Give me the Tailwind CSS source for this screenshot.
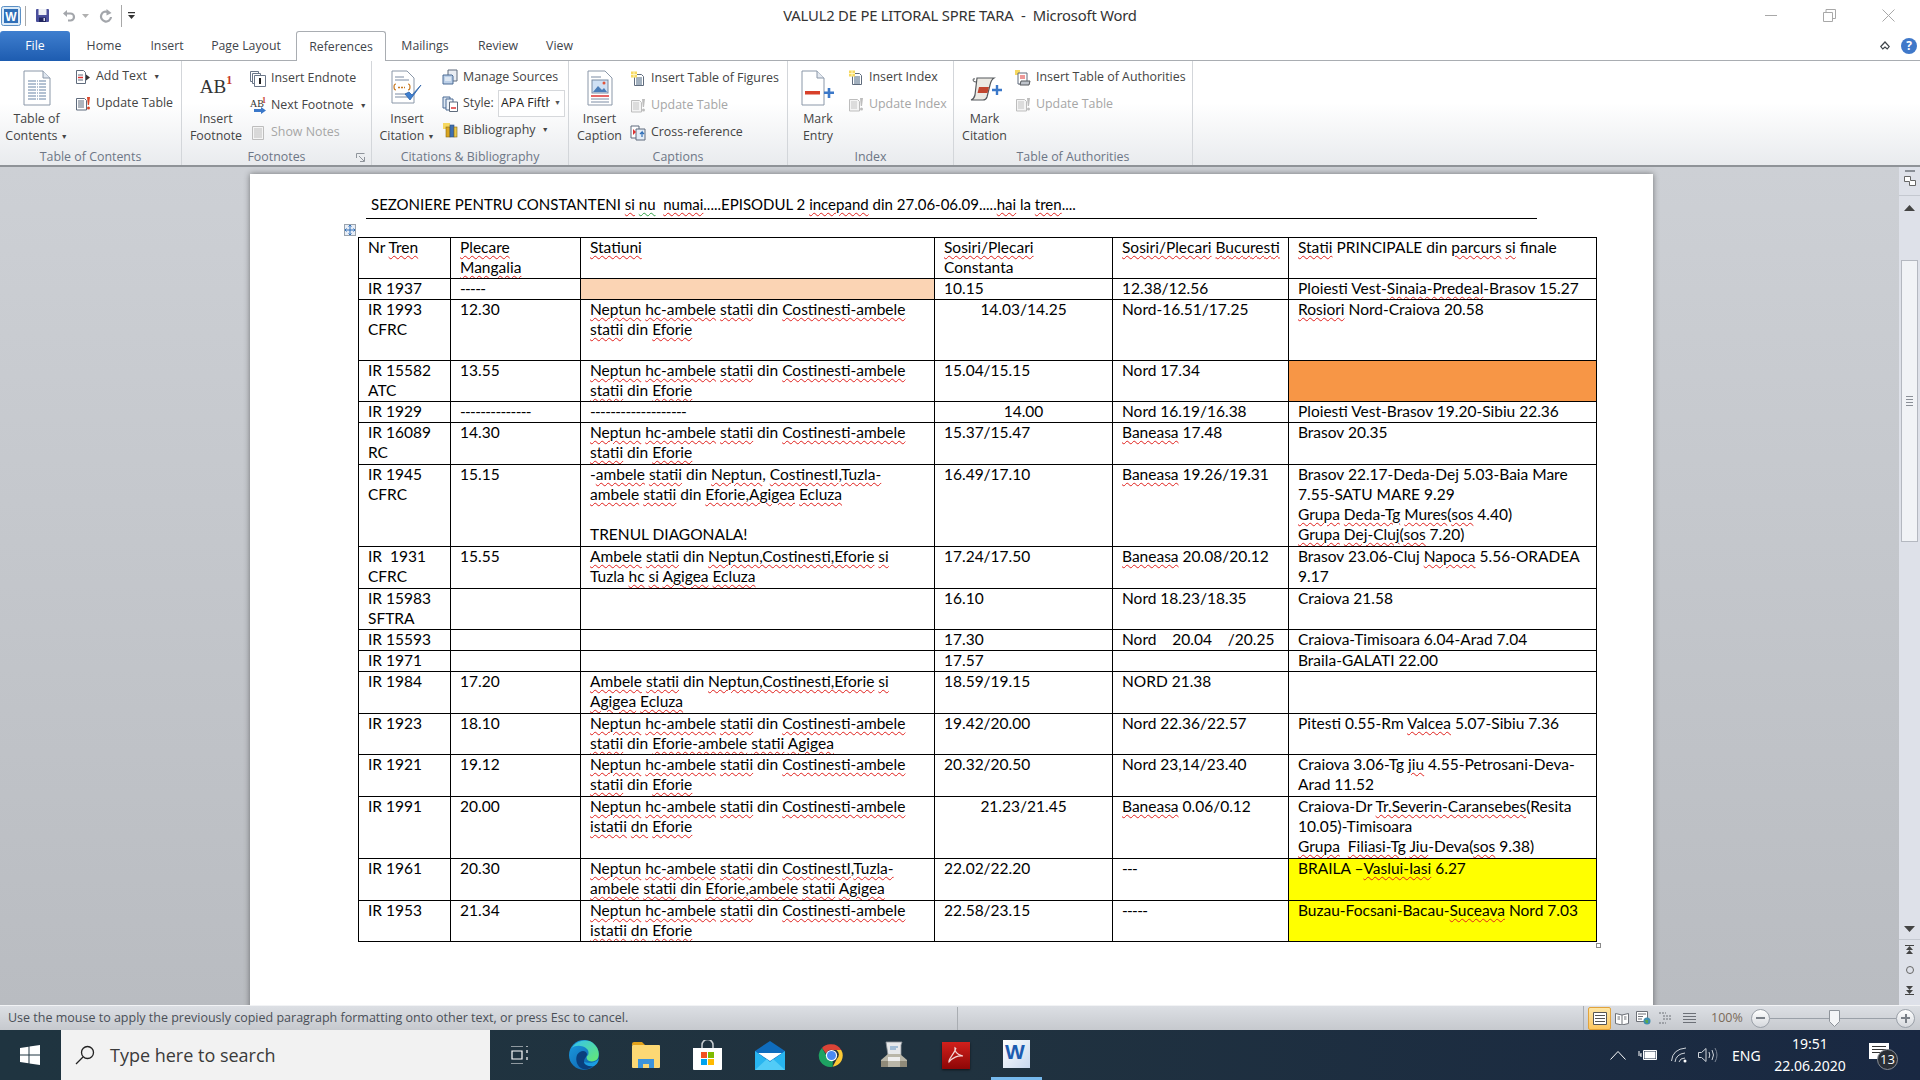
<!DOCTYPE html>
<html lang="en">
  <head>
    <meta charset="UTF-8" />
    <script src="https://cdn.jsdelivr.net/npm/@tailwindcss/browser@4"></script>
    <title>VALUL2 DE PE LITORAL SPRE TARA - Microsoft Word</title>
  </head>
  <body class="overflow-hidden bg-white font-['Open_Sans',sans-serif]">
    <!-- shared ribbon icons -->
    <svg class="hidden">
      <symbol id="update" viewBox="0 0 16 16">
        <path d="M1.5 2.5h8l2 2v9.500h-10z" fill="#fff" stroke="#5f6b7c" />
        <path d="M3 5h6M3 7h6M3 9h6M3 11h6" stroke="#5f6b7c" />
        <path d="M12 1h3l-1 8h-1.200z" fill="#d9482b" />
        <circle cx="13.500" cy="12" r="1.500" fill="#d9482b" />
      </symbol>
      <symbol id="updateoff" viewBox="0 0 16 16">
        <path d="M1.500 2.500h8l2 2v9.500h-10z" fill="#f4f4f4" stroke="#bdbdbd" />
        <path d="M3 5h6M3 7h6M3 9h6M3 11h6" stroke="#c4c4c4" />
        <path d="M12 1h3l-1 8h-1.200z" fill="#bdbdbd" />
        <circle cx="13.500" cy="12" r="1.500" fill="#bdbdbd" />
      </symbol>
      <symbol id="newlist" viewBox="0 0 16 16">
        <path d="M4.500 3.500h7l2 2v9h-9z" fill="#fff" stroke="#5f6b7c" />
        <path d="M6 7h6M6 9h6M6 11h6M6 13h6" stroke="#47637f" />
        <rect x="1" y="0.500" width="6" height="6" fill="#f6d860" />
        <path d="M1 3.500h6M4 .5v6" stroke="#fff6c4" />
      </symbol>
    </svg>

    <div class="flex h-[1080px] w-[1920px] flex-col">
      <!-- title bar -->
      <header class="grid h-[31px] shrink-0 grid-cols-[1fr_auto_1fr] items-center">
        <div class="flex items-center pl-[1px]">
          <svg class="h-[20px] w-[20px]" viewBox="0 0 20 20">
            <rect x=".5" y=".5" width="19" height="19" rx="2" fill="#dcebf8" stroke="#5b8fc4" />
            <rect x="3" y="3" width="14" height="14" fill="#2f6fb8" />
            <text x="10" y="15" text-anchor="middle" font-family="Liberation Sans" font-weight="700" font-size="12" fill="#fff">W</text>
          </svg>
          <div class="ml-[4px] h-[20px] w-px bg-[#a8a8a8]"></div>
          <svg class="ml-[9px] h-[15px] w-[15px]" viewBox="0 0 15 15">
            <rect x="1" y="1" width="13" height="13" rx="1" fill="#4a4f9c" />
            <rect x="3.500" y="1" width="8" height="6" fill="#eef0f6" />
            <rect x="4" y="9.500" width="7" height="4.500" fill="#20245e" />
            <rect x="8.500" y="10" width="1.500" height="3" fill="#d7d9ea" />
          </svg>
          <svg class="ml-[12px] h-[14px] w-[14px]" viewBox="0 0 14 14" fill="none" stroke="#a3a6ab" stroke-width="2.200">
            <path d="M3 4.500h5.500a3.500 3.500 0 0 1 0 7H6" />
            <path d="M1 4.500 5 1v7z" fill="#a3a6ab" stroke="none" />
          </svg>
          <svg class="ml-[6px] h-[4px] w-[7px]" viewBox="0 0 7 4"><path d="M0 0h7L3.500 4z" fill="#b0b0b0" /></svg>
          <svg class="ml-[10px] h-[14px] w-[14px]" viewBox="0 0 14 14" fill="none" stroke="#a3a6ab" stroke-width="2.200">
            <path d="M9.500 3.200a5 5 0 1 0 2.500 4.800" />
            <path d="M7.500 0v6.500l5-2.500z" fill="#a3a6ab" stroke="none" />
          </svg>
          <div class="ml-[8px] h-[22px] w-px bg-[#a8a8a8]"></div>
          <svg class="ml-[6px] h-[7px] w-[7px]" viewBox="0 0 7 7">
            <path d="M0 0h7v1.300H0zM0 3h7L3.500 7z" fill="#333" />
          </svg>
        </div>
        <h1 class="whitespace-pre text-[14.800px] tracking-[-0.2px] text-[#333] font-['Noto_Sans',sans-serif]">VALUL2 DE PE LITORAL SPRE TARA  -  Microsoft Word</h1>
        <div class="flex items-center justify-end pr-[25px]">
          <div class="h-px w-[12px] bg-[#a8a8a8]"></div>
          <svg class="ml-[46px] h-[13px] w-[13px]" viewBox="0 0 13 13" fill="none" stroke="#a8a8a8">
            <path d="M.5 3.500h9v9h-9zM3 3.500V.5h9.500v9h-3" />
          </svg>
          <svg class="ml-[46px] h-[13px] w-[13px]" viewBox="0 0 13 13" stroke="#a8a8a8"><path d="m.5.5 12 12m0-12-12 12" /></svg>
        </div>
      </header>

      <!-- ribbon tabs -->
      <nav class="flex h-[30px] shrink-0 items-stretch border-b border-[#a9adb2] text-[12.300px] text-[#3f454b]">
        <div class="-mb-px flex w-[70px] items-center justify-center rounded-t-[3px] bg-gradient-to-b from-[#3f7fcf] to-[#1d5cb0] pt-[1px] text-white">File</div>
        <div class="flex w-[68px] items-center justify-center pt-[2px]">Home</div>
        <div class="flex w-[58px] items-center justify-center pt-[2px]">Insert</div>
        <div class="flex w-[100px] items-center justify-center pt-[2px]">Page Layout</div>
        <div class="-mb-px flex w-[90px] items-center justify-center rounded-t-[3px] border border-b-0 border-[#a9adb2] bg-white pt-[2px]">References</div>
        <div class="flex w-[78px] items-center justify-center pt-[2px]">Mailings</div>
        <div class="flex w-[68px] items-center justify-center pt-[2px]">Review</div>
        <div class="flex w-[55px] items-center justify-center pt-[2px]">View</div>
        <div class="flex flex-1 items-center justify-end gap-[11px] pr-[3px]">
          <svg class="h-[9px] w-[10px]" viewBox="0 0 10 9" fill="none" stroke="#3f454b" stroke-width="1.200"><path d="M.8 5.500 5 1l4.200 4.500-2 2.500L5 6 2.800 8z" /></svg>
          <div class="flex h-[16px] w-[16px] items-center justify-center rounded-full bg-[#3f78c9] text-[12px] font-bold text-white">?</div>
        </div>
      </nav>

      <!-- ribbon -->
      <section class="flex h-[106px] shrink-0 border-b-2 border-[#8f9398] bg-gradient-to-b from-white from-40% to-[#e9ebee] text-[12.400px] text-[#444]">
        <!-- table of contents -->
        <div class="flex w-[182px] flex-col border-r border-[#d3d6da]">
          <div class="flex flex-1 pt-[3px]">
            <div class="flex w-[73px] flex-col items-center pt-[6px] text-center leading-[17px]">
              <svg class="h-[36px] w-[28px]" viewBox="0 0 28 36">
                <path d="M1 1h19l7 7v27H1z" fill="#fff" stroke="#8a97a8" />
                <path d="M20 1v7h7" fill="#dfe6ef" stroke="#8a97a8" />
                <path d="M5 11h18M5 14h18M5 17h18M5 20h18M5 23h18M5 26h18M5 29h18" stroke="#6883a5" stroke-width="1.200" stroke-dasharray="8 1 1 1" />
              </svg>
              <div class="mt-[4px]">Table of<br />Contents <span class="text-[7px] align-middle">▼</span></div>
            </div>
            <div class="-mt-[1px] flex flex-col whitespace-nowrap pl-[2px]">
              <div class="flex h-[27px] items-center gap-[5px]">
                <svg class="h-[16px] w-[16px]" viewBox="0 0 16 16"><path d="M1.500 1.500h7l2 2v11h-9z" fill="#fff" stroke="#5f6b7c" /><path d="M3 6h5M3 11h5" stroke="#5f6b7c" /><path d="M3 8.500h5" stroke="#d33" stroke-width="1.500" /><path d="M11 5.500 15 8.500l-4 3z" fill="#333" /></svg>
                <span>Add Text <span class="ml-[3px] text-[7px] align-middle">▼</span></span>
              </div>
              <div class="flex h-[27px] items-center gap-[5px]"><svg class="h-[16px] w-[16px]"><use href="#update" /></svg>Update Table</div>
            </div>
          </div>
          <p class="h-[17px] text-center leading-[17px] text-[#6d7686]">Table of Contents</p>
        </div>

        <!-- footnotes -->
        <div class="relative flex w-[190px] flex-col border-r border-[#d3d6da]">
          <div class="flex flex-1 pt-[3px]">
            <div class="flex w-[68px] flex-col items-center pt-[6px] text-center leading-[17px]">
              <div class="flex h-[36px] items-start pt-[6px] font-['Liberation_Serif',serif] text-[19px] leading-[22px] text-[#333]">AB<span class="-mt-[3px] text-[12px] font-bold leading-[14px] text-[#c8381f]">1</span></div>
              <div class="mt-[4px]">Insert<br />Footnote</div>
            </div>
            <div class="mt-[1px] flex flex-col whitespace-nowrap">
              <div class="flex h-[27px] items-center gap-[5px]">
                <svg class="h-[16px] w-[16px]" viewBox="0 0 16 16" fill="#fff" stroke="#6a7688"><path d="M.5.500h8v10h-8z" /><path d="M2.500 2.500h8v10h-8z" /><path d="M4.500 4.500h11v11h-11z" /><path d="M10 7v6" stroke="#222" stroke-width="2" /></svg>
                Insert Endnote
              </div>
              <div class="flex h-[27px] items-center gap-[5px]">
                <div class="relative flex h-[16px] w-[16px] items-start font-['Liberation_Serif',serif] text-[10px] leading-[12px] text-[#333]">AB<span class="absolute -top-[3px] right-0 text-[8px] font-bold text-[#c8381f]">1</span>
                  <svg class="absolute bottom-0 right-0 h-[7px] w-[12px]" viewBox="0 0 12 7"><path d="M0 2h7V0l5 3.500L7 7V5H0z" fill="#3b78c9" /></svg>
                </div>
                <span>Next Footnote <span class="ml-[3px] text-[7px] align-middle">▼</span></span>
              </div>
              <div class="flex h-[27px] items-center gap-[5px] text-[#a6a6a6]">
                <svg class="h-[16px] w-[16px]" viewBox="0 0 16 16" stroke="#bdbdbd"><path d="M2.500 1.500h11v13h-11z" fill="#f4f4f4" /><path d="M4 4h8M4 6h8M4 8h8M4 10h8M4 12h8" /></svg>
                Show Notes
              </div>
            </div>
          </div>
          <p class="h-[17px] text-center leading-[17px] text-[#6d7686]">Footnotes</p>
          <svg class="absolute bottom-[3px] right-[6px] h-[9px] w-[9px]" viewBox="0 0 9 9" fill="none" stroke="#8f949b"><path d="M.5 5V.5H8.500M3 3l5 5M4 8.500h4.500V4" /></svg>
        </div>

        <!-- citations -->
        <div class="flex w-[197px] flex-col border-r border-[#d3d6da]">
          <div class="flex flex-1 pt-[3px]">
            <div class="flex w-[70px] flex-col items-center pt-[6px] text-center leading-[17px]">
              <svg class="h-[36px] w-[32px]" viewBox="0 0 32 36">
                <path d="M1 1h15l7 7v25H1z" fill="#fff" stroke="#8a97a8" />
                <path d="M4 7h9M4 10h14M4 24h14M4 27h14" stroke="#7a8ba3" />
                <path d="M5 14q-2 0-2 3t2 3M17 14q2 0 2 3t-2 3" fill="none" stroke="#c97a22" stroke-width="1.200" />
                <path d="M7 17.500h7" stroke="#c97a22" stroke-width="1.500" stroke-dasharray="2 1" />
                <path d="m14 24 5 6 11-15-9 10-3-3z" fill="#3d7fd0" stroke="#2c62a8" stroke-width=".8" />
              </svg>
              <div class="mt-[4px]">Insert<br />Citation <span class="text-[7px] align-middle">▼</span></div>
            </div>
            <div class="flex flex-col whitespace-nowrap">
              <div class="flex h-[26px] items-center gap-[5px]">
                <svg class="h-[16px] w-[16px]" viewBox="0 0 16 16"><path d="M6 1h9v11H6z" fill="#e9edf3" stroke="#5f6b7c" /><path d="M1 6h9l1 1v8H1z" fill="#bcd0e8" stroke="#4a6b94" /><path d="M3 9h6M3 11h6" stroke="#fff" /></svg>
                Manage Sources
              </div>
              <div class="flex h-[27px] items-center">
                <svg class="h-[16px] w-[16px]" viewBox="0 0 16 16"><path d="M1 1h7v11H1z" fill="#dce6f2" stroke="#4a6b94" /><path d="M4 3h7v11H4z" fill="#eef3f9" stroke="#4a6b94" /><path d="M7.500 6h8v9.500h-8z" fill="#fff" stroke="#5f6b7c" /><path d="M9 12h5" stroke="#d33" stroke-width="1.500" /></svg>
                <span class="ml-[5px] w-[34px]">Style:</span>
                <div class="ml-[1px] flex h-[27px] w-[67px] items-center overflow-hidden border border-[#d6d8db] bg-white pl-[2px] text-[#222]"><span class="w-[49px] overflow-hidden whitespace-nowrap">APA Fifth</span><span class="ml-[4px] text-[7px] text-[#555]">▼</span></div>
              </div>
              <div class="flex h-[26px] items-center gap-[5px]">
                <svg class="h-[16px] w-[16px]" viewBox="0 0 16 16"><rect x="1" y="1" width="7" height="6" fill="#f6d860" /><rect x="4" y="5" width="4" height="10" fill="#d9a520" stroke="#8a6a14" stroke-width=".6" /><rect x="8" y="3" width="4" height="12" fill="#3f6fb0" stroke="#2a4d80" stroke-width=".6" /><rect x="12" y="5" width="3" height="10" fill="#e7c64a" stroke="#8a6a14" stroke-width=".6" /></svg>
                <span>Bibliography <span class="ml-[3px] text-[7px] align-middle">▼</span></span>
              </div>
            </div>
          </div>
          <p class="h-[17px] text-center leading-[17px] text-[#6d7686]">Citations &amp; Bibliography</p>
        </div>

        <!-- captions -->
        <div class="flex w-[219px] flex-col border-r border-[#d3d6da]">
          <div class="flex flex-1 pt-[3px]">
            <div class="flex w-[61px] flex-col items-center pt-[6px] text-center leading-[17px]">
              <svg class="h-[36px] w-[26px]" viewBox="0 0 26 36">
                <path d="M1 1h17l7 7v27H1z" fill="#fff" stroke="#8a97a8" />
                <path d="M4 7h10" stroke="#7a8ba3" />
                <rect x="5" y="10" width="16" height="13" fill="#cfe0f4" stroke="#7a8ba3" />
                <path d="m6 22 5-6 4 4 2-2 3 4z" fill="#4a7cb8" />
                <circle cx="17" cy="13" r="1.500" fill="#e0533a" />
                <path d="M4 26h18" stroke="#d33" stroke-width="1.500" /><path d="M4 29h18M4 32h18" stroke="#7a8ba3" />
              </svg>
              <div class="mt-[4px]">Insert<br />Caption</div>
            </div>
            <div class="mt-[1px] flex flex-col whitespace-nowrap">
              <div class="flex h-[27px] items-center gap-[5px]"><svg class="h-[16px] w-[16px]"><use href="#newlist" /></svg>Insert Table of Figures</div>
              <div class="flex h-[27px] items-center gap-[5px] text-[#a6a6a6]"><svg class="h-[16px] w-[16px]"><use href="#updateoff" /></svg>Update Table</div>
              <div class="flex h-[27px] items-center gap-[5px]">
                <svg class="h-[16px] w-[16px]" viewBox="0 0 16 16"><path d="M1 1h8v12H1z" fill="#fff" stroke="#5f6b7c" /><path d="M6 4h9v11H6z" fill="#e4edf7" stroke="#5f6b7c" /><path d="m3 4 3 3-3 3z" fill="#d33" /><path d="M12 12V7l-2 2m2-2 2 2" fill="none" stroke="#2f6fb8" stroke-width="1.200" /></svg>
                Cross-reference
              </div>
            </div>
          </div>
          <p class="h-[17px] text-center leading-[17px] text-[#6d7686]">Captions</p>
        </div>

        <!-- index -->
        <div class="flex w-[166px] flex-col border-r border-[#d3d6da]">
          <div class="flex flex-1 pt-[3px]">
            <div class="flex w-[60px] flex-col items-center pt-[6px] text-center leading-[17px]">
              <svg class="h-[36px] w-[34px]" viewBox="0 0 34 36">
                <path d="M1 1h15l7 7v27H1z" fill="#fff" stroke="#8a97a8" />
                <path d="M16 1v7h7" fill="#e4e9f0" stroke="#8a97a8" />
                <rect x="4" y="21" width="15" height="3.500" fill="#d8402a" />
                <path d="M23 22.800h10M28 18v10" stroke="#3b78c9" stroke-width="2.600" />
              </svg>
              <div class="mt-[4px]">Mark<br />Entry</div>
            </div>
            <div class="flex flex-col whitespace-nowrap">
              <div class="flex h-[27px] items-center gap-[5px]"><svg class="h-[16px] w-[16px]"><use href="#newlist" /></svg>Insert Index</div>
              <div class="flex h-[27px] items-center gap-[5px] text-[#a6a6a6]"><svg class="h-[16px] w-[16px]"><use href="#updateoff" /></svg>Update Index</div>
            </div>
          </div>
          <p class="h-[17px] text-center leading-[17px] text-[#6d7686]">Index</p>
        </div>

        <!-- authorities -->
        <div class="flex w-[239px] flex-col border-r border-[#d3d6da]">
          <div class="flex flex-1 pt-[3px]">
            <div class="flex w-[61px] flex-col items-center pt-[6px] text-center leading-[17px]">
              <svg class="h-[36px] w-[34px]" viewBox="0 0 34 36">
                <path d="M9 8h17q-3 2-4 7l-3 12q-1 3-4 3H3q3-1 4-5z" fill="#eceae4" stroke="#55585c" stroke-width="1.200" />
                <path d="M7 9q-2-1-2 1 0 2 3 2" fill="none" stroke="#55585c" />
                <path d="M11 17h10l-1.500 6h-10z" fill="#c1462f" />
                <path d="M24 20h10M29 15v10" stroke="#3b78c9" stroke-width="2.400" />
              </svg>
              <div class="mt-[4px]">Mark<br />Citation</div>
            </div>
            <div class="flex flex-col whitespace-nowrap">
              <div class="flex h-[27px] items-center gap-[5px]">
                <svg class="h-[16px] w-[16px]" viewBox="0 0 16 16"><rect x="0" y="0" width="5" height="5" fill="#f6d860" /><path d="M3 3h9v11H3z" fill="#fff" stroke="#5f6b7c" /><path d="M5 6h5M5 8h5" stroke="#d33" /><path d="M6 11h9l-1 4H5z" fill="#bfc4cb" stroke="#55585c" /></svg>
                Insert Table of Authorities
              </div>
              <div class="flex h-[27px] items-center gap-[5px] text-[#a6a6a6]"><svg class="h-[16px] w-[16px]"><use href="#updateoff" /></svg>Update Table</div>
            </div>
          </div>
          <p class="h-[17px] text-center leading-[17px] text-[#6d7686]">Table of Authorities</p>
        </div>
      </section>

      <!-- document -->
      <main class="flex min-h-0 flex-1 bg-gradient-to-b from-[#cdd0d5] to-[#b9bcc1]">
        <div class="min-w-0 flex-1 overflow-hidden">
          <div class="relative ml-[250px] mt-[7px] h-[900px] w-[1403px] bg-white pt-[21px] font-['Lato',sans-serif] text-[15.500px] text-black shadow-[0_0_6px_rgba(0,0,0,0.45)]">
            <div id="heading" class="ml-[116px] h-[24px] w-[1171px] whitespace-pre border-b border-black pl-[5px] text-[15px] leading-[18px]"></div>
            <div class="relative ml-[108px] mt-[18px] w-[1238px]">
              <div class="absolute -left-[14px] -top-[13px] flex h-[12px] w-[12px] items-center justify-center border border-[#9aa3ad] bg-[#e8eef7]">
                <svg class="h-[10px] w-[10px]" viewBox="0 0 10 10" fill="none" stroke="#2f6fb8"><path d="M5 0v10M0 5h10M3.500 1.500 5 0l1.500 1.500M3.500 8.500 5 10l1.500-1.500M1.500 3.500 0 5l1.500 1.500M8.500 3.500 10 5 8.500 6.500" /></svg>
              </div>
              <table class="w-[1238px] table-fixed border-collapse">
                <colgroup>
                  <col class="w-[92px]" /><col class="w-[130px]" /><col class="w-[354px]" /><col class="w-[178px]" /><col class="w-[176px]" /><col class="w-[308px]" />
                </colgroup>
                <tbody id="rows"></tbody>
              </table>
              <div class="absolute -bottom-[6px] -right-[5px] h-[5px] w-[5px] border border-[#8a8a8a] bg-white"></div>
            </div>
          </div>
        </div>

        <!-- scrollbar -->
        <aside class="flex w-[21px] shrink-0 flex-col items-center bg-[#dee1e9]">
          <div class="flex h-[29px] w-full flex-col items-center border-b border-[#c4c8d0] pt-[3px]">
            <div class="h-[2px] w-[10px] bg-[#8a8f97]"></div>
            <svg class="mt-[3px] h-[12px] w-[12px]" viewBox="0 0 12 12" fill="#fff" stroke="#666"><path d="M.5 1.500h6v4h5v5h-6v-4h-5z" /></svg>
          </div>
          <svg class="mt-[9px] h-[6px] w-[11px]" viewBox="0 0 11 6"><path d="M5.500 0 11 6H0z" fill="#444" /></svg>
          <div class="mt-[49px] flex h-[282px] w-[17px] flex-col items-center justify-center gap-[2px] border border-[#b4b8c0] bg-[#f1f3f6]">
            <div class="h-px w-[7px] bg-[#8a8f97]"></div><div class="h-px w-[7px] bg-[#8a8f97]"></div><div class="h-px w-[7px] bg-[#8a8f97]"></div><div class="h-px w-[7px] bg-[#8a8f97]"></div>
          </div>
          <svg class="mt-auto h-[6px] w-[11px]" viewBox="0 0 11 6"><path d="M0 0h11L5.500 6z" fill="#444" /></svg>
          <div class="mt-[7px] flex h-[66px] w-full flex-col items-center gap-[12px] border-t border-[#c4c8d0] pt-[5px]">
            <svg class="h-[9px] w-[9px]" viewBox="0 0 9 9"><path d="M0 0h9v1H0zM4.500 1 8 5H1zM4.500 5 8 9H1z" fill="#444" /></svg>
            <div class="h-[8px] w-[8px] rounded-full border border-[#666]"></div>
            <svg class="h-[9px] w-[9px]" viewBox="0 0 9 9"><path d="M0 8h9v1H0zM4.500 8 8 4H1zM4.500 4 8 0H1z" fill="#444" /></svg>
          </div>
        </aside>
      </main>

      <!-- status bar -->
      <footer class="flex h-[25px] shrink-0 items-center border-t border-[#f2f3f5] bg-gradient-to-b from-[#dcdfe4] to-[#c6c9ce] text-[#4a4f57]">
        <span class="w-[958px] whitespace-nowrap border-r border-[#a9adb2] pb-[2px] pl-[8px] text-[12.500px] leading-[21px]">Use the mouse to apply the previously copied paragraph formatting onto other text, or press Esc to cancel.</span>
        <div class="ml-[625px] flex h-full items-center border-l border-[#a9adb2] pl-[4px]">
          <div class="flex h-[23px] w-[23px] items-center justify-center rounded-[2px] border border-[#e2a33c] bg-gradient-to-b from-[#fde6a6] to-[#fcc65f]">
            <svg class="h-[13px] w-[14px]" viewBox="0 0 14 13" fill="#fff" stroke="#555"><path d="M.5.5h13v12H.5z" /><path d="M2 3.500h10M2 6.500h10M2 9.500h10" /></svg>
          </div>
          <svg class="ml-[4px] h-[13px] w-[14px]" viewBox="0 0 14 13" fill="#fff" stroke="#6c7077"><path d="M.5 1.500 7 3l6.500-1.500v10L7 13 .5 11.500zM7 3v10M2.500 5H5M2.500 7H5M9 5h2.500M9 7h2.500" /></svg>
          <svg class="ml-[7px] h-[14px] w-[15px]" viewBox="0 0 15 14"><path d="M.5.5h11v10H.5zM2 3h8M2 5.500h5M2 8h4" fill="#fff" stroke="#6c7077" /><circle cx="11" cy="10" r="3.500" fill="#3f8fb0" /><path d="M9 9h3v3h-2z" fill="#5aa84a" /></svg>
          <svg class="ml-[8px] h-[12px] w-[13px]" viewBox="0 0 13 12" stroke="#6c7077" stroke-dasharray="2 1"><path d="M0 1h7M4 4h9M4 7h9M0 11h7" /></svg>
          <svg class="ml-[11px] h-[11px] w-[13px]" viewBox="0 0 13 11" stroke="#6c7077"><path d="M0 .5h13M0 3.500h13M0 6.500h13M0 9.500h13" /></svg>
          <span class="ml-[15px] w-[32px] text-[12.500px] text-[#7a6a58]">100%</span>
          <div class="ml-[8px] flex h-[19px] w-[19px] items-center justify-center rounded-full border border-[#9aa0a8] bg-gradient-to-b from-white to-[#d5d8dd]"><div class="h-[2px] w-[9px] bg-[#7a8088]"></div></div>
          <div class="relative h-px w-[126px] bg-[#9aa0a8]">
            <svg class="absolute -top-[8px] left-[59px] h-[17px] w-[11px]" viewBox="0 0 11 17"><path d="M.5.5h10v11l-5 5-5-5z" fill="#f4f5f7" stroke="#8f949b" /></svg>
          </div>
          <div class="relative flex h-[19px] w-[19px] items-center justify-center rounded-full border border-[#9aa0a8] bg-gradient-to-b from-white to-[#d5d8dd]"><div class="h-[2px] w-[9px] bg-[#7a8088]"></div><div class="absolute h-[9px] w-[2px] bg-[#7a8088]"></div></div>
        </div>
      </footer>

      <!-- windows taskbar -->
      <div class="flex h-[50px] shrink-0 items-center bg-gradient-to-r from-[#1f3440] via-[#20323f] to-[#192842] text-white">
        <svg class="ml-[20px] h-[20px] w-[20px]" viewBox="0 0 20 20" fill="#fff"><path d="M0 3 8.500 1.800v7.700H0zM9.500 1.600 20 0v9.500H9.500zM0 10.500h8.500v7.700L0 17zM9.500 10.500H20V20L9.500 18.400z" /></svg>
        <div class="ml-[21px] flex h-full w-[429px] items-center bg-[#f2f2f2] font-['Open_Sans',sans-serif] text-[18px] text-[#3a3a3a]">
          <svg class="ml-[14px] h-[20px] w-[20px]" viewBox="0 0 20 20" fill="none" stroke="#222" stroke-width="1.300"><circle cx="12.500" cy="7.500" r="6" /><path d="M8 12 1 19" /></svg>
          <span class="ml-[15px]">Type here to search</span>
        </div>
        <svg class="ml-[20px] h-[18px] w-[20px]" viewBox="0 0 20 18" fill="none" stroke="#fff" stroke-width="1.200"><path d="M1 0h12M1 18h12M2 5h10v8H2zM17 0v1M17 4v3M17 11v3" /></svg>

        <svg class="ml-[39px] h-[30px] w-[30px]" viewBox="0 0 30 30">
          <defs>
            <linearGradient id="edgea" x1="0" y1="0" x2="1" y2="1"><stop offset="0" stop-color="#1b9de2" /><stop offset="1" stop-color="#0c59a4" /></linearGradient>
            <linearGradient id="edgeb" x1="0" y1="0" x2="1" y2="1"><stop offset="0" stop-color="#35c1f1" /><stop offset="1" stop-color="#66eb6e" /></linearGradient>
          </defs>
          <circle cx="15" cy="15" r="15" fill="url(#edgea)" />
          <path d="M3 8C7 1 17-2 24 3c5 4 7 10 5 15-1 3-6 4-9 3-2-1-3-3-2-5 2-1 2-5 0-7-4-4-12-4-15-1z" fill="url(#edgeb)" />
          <path d="M8 15c3-5 9-5 10-1 0 3-3 4-3 8 0 3 5 5 10 3-3 3-7 5-11 4-6-2-8-9-6-14z" fill="#0a3f7d" />
          <path d="M30 19c-1 4-3 6-5 7-5 1-9-1-10-4 3 1 10 2 15-3z" fill="#1b9de2" />
        </svg>

        <svg class="ml-[33px] h-[26px] w-[28px]" viewBox="0 0 28 26">
          <path d="M0 2q0-2 2-2h8l3 3h-13z" fill="#e3a21a" />
          <rect y="3" width="28" height="23" rx="1" fill="#fcd874" />
          <path d="M6 26v-9h16v9h-5v-4h-6v4z" fill="#3c94dc" />
          <rect x="11" y="22" width="6" height="4" fill="#fcd874" />
        </svg>

        <svg class="ml-[33px] h-[30px] w-[29px]" viewBox="0 0 29 30">
          <path d="M9 9V5a5.500 5.500 0 0 1 11 0v4" fill="none" stroke="#c9ced2" stroke-width="1.500" />
          <path d="M0 8h29v21q0 1-1 1H1q-1 0-1-1z" fill="#fff" />
          <rect x="8" y="12" width="6" height="6" fill="#f25022" /><rect x="15" y="12" width="6" height="6" fill="#7fba00" />
          <rect x="8" y="19" width="6" height="6" fill="#00a4ef" /><rect x="15" y="19" width="6" height="6" fill="#ffb900" />
        </svg>

        <svg class="ml-[33px] h-[29px] w-[30px]" viewBox="0 0 30 29">
          <path d="M0 10 15 0l15 10v19H0z" fill="#0f6cbd" />
          <path d="M3 12h24l-12 8z" fill="#fff" />
          <path d="M0 10v19h30V10L15 21z" fill="#28b5f0" />
          <path d="M0 29 12 18l3 3 3-3 12 11z" fill="#52ccf7" />
        </svg>

        <svg class="ml-[33px] h-[27px] w-[27px]" viewBox="0 0 48 48">
          <path d="M24 4a20 20 0 0 1 17.300 10H24a10 10 0 0 0-9.600 7L7 10.500A20 20 0 0 1 24 4z" fill="#db4437" />
          <path d="M41.300 14A20 20 0 0 1 26 43.900L33.500 30a10 10 0 0 0-.8-16z" fill="#fcc934" />
          <path d="M26 43.900A20 20 0 0 1 7 10.500l8.500 14.500a10 10 0 0 0 11 8.800z" fill="#1ea362" />
          <circle cx="24" cy="24" r="10" fill="#fff" /><circle cx="24" cy="24" r="8" fill="#4a8af4" />
        </svg>

        <svg class="ml-[35px] h-[28px] w-[28px]" viewBox="0 0 28 28">
          <path d="M6 1h16l-1 3v10H8z" fill="#e6e8ea" stroke="#8e9398" stroke-width=".8" />
          <path d="M10 6h8M10 8h6" stroke="#5e8fc0" stroke-width="1.200" />
          <path d="M1 19l7-6h12l7 6v7H1z" fill="#b9b6a8" />
          <path d="M1 20h7v6H1zM20 20h7v6h-7z" fill="#8f8a79" />
          <path d="M8 16h12v4H8z" fill="#eeeeee" />
        </svg>

        <div class="ml-[34px] flex h-[27px] w-[28px] items-center justify-center bg-gradient-to-b from-[#d1201c] to-[#8e0606] shadow-[0_1px_2px_rgba(0,0,0,0.6)]">
          <svg class="h-[18px] w-[18px]" viewBox="0 0 18 18" fill="none" stroke="#f5d8d8" stroke-width="1.200"><path d="M8 1c-1 4 2 8 8 9-5-1-11 2-14 6-1-3 5-7 7-14" /></svg>
        </div>

        <div class="relative ml-[21px] flex h-full w-[51px] justify-center pt-[10px]">
          <div class="relative h-[28px] w-[27px] bg-gradient-to-br from-[#fff] to-[#c8d8ee] pl-[2px] font-['Liberation_Sans',sans-serif] text-[21px] font-bold leading-[24px] text-[#1c5bb0]">W</div>
          <div class="absolute bottom-0 h-[3px] w-[51px] bg-[#76b9ed]"></div>
        </div>

        <div class="ml-auto flex items-center pr-[17px] text-[14px]">
          <svg class="h-[9px] w-[16px]" viewBox="0 0 16 9" fill="none" stroke="#fff"><path d="m.5 8.500 7.500-8 7.500 8" /></svg>
          <svg class="ml-[12px] h-[12px] w-[20px]" viewBox="0 0 20 12" fill="none" stroke="#fff"><path d="M5.500 1.500h13v9h-13z" /><rect x="7" y="3" width="10" height="6" fill="#fff" /><path d="M0 6h3M3 4v4M1 2v3" /></svg>
          <svg class="ml-[13px] h-[16px] w-[17px]" viewBox="0 0 17 16" fill="none" stroke="#cfd4da"><path d="M.5 14Q1.500 2 15 1M4 15q1-8 10-9M8 15q1-4 6-4" /><circle cx="14" cy="14" r="1.500" fill="#fff" stroke="none" /></svg>
          <svg class="ml-[10px] h-[16px] w-[20px]" viewBox="0 0 20 16" fill="none" stroke="#cfd4da"><path d="M.5 5.500h3L8 1.500v13l-4.500-4h-3z" /><path d="M11 5q1.500 3 0 6M14 3q3 5 0 10" /><path d="M17 1q4 7 0 14" stroke="#7a8494" /></svg>
          <span class="ml-[14px] w-[30px] font-['Noto_Sans',sans-serif]">ENG</span>
          <div class="ml-[12px] w-[72px] text-center font-['Noto_Sans',sans-serif] text-[14px] leading-[22px]">19:51<br />22.06.2020</div>
          <div class="relative ml-[23px] h-[24px] w-[34px]">
            <div class="absolute left-0 top-0 h-[16px] w-[20px] bg-white">
              <div class="mx-[3px] mt-[3px] h-px bg-[#333]"></div><div class="mx-[3px] mt-[2px] h-px bg-[#333]"></div><div class="mx-[3px] mt-[2px] h-px bg-[#333]"></div>
            </div>
            <div class="absolute -bottom-[3px] left-[8px] flex h-[21px] w-[21px] items-center justify-center rounded-full border border-[#8b8f96] bg-[#2a2f36] text-[13px]">13</div>
          </div>
        </div>
      </div>
    </div>

    <script>
      // ~word~ = red spelling squiggle, ^word^ = green grammar squiggle
      const red = "underline decoration-wavy decoration-[#e0201c] decoration-1 underline-offset-[2px]";
      const green = "underline decoration-wavy decoration-[#2f9e44] decoration-1 underline-offset-[2px]";
      const mark = (text) =>
        text
          .replace(/~([^~]+)~/g, `<span class="${red}">$1</span>`)
          .replace(/\^([^^]+)\^/g, `<span class="${green}">$1</span>`);

      const nept = "~Neptun~ ~hc-ambele~ ~statii~ din ~Costinesti-ambele~\n";
      const rows = [
        [41, "Nr ~Tren~", "~Plecare~\n~Mangalia~", "~Statiuni~", "~Sosiri/Plecari~\nConstanta", "~Sosiri/Plecari~ ~Bucuresti~", "~Statii~ PRINCIPALE din ~parcurs~ ~si~ finale"],
        [21, "IR 1937", "-----", "#peach", "10.15", "12.38/12.56", "Ploiesti Vest-~Sinaia-Predeal~-Brasov 15.27"],
        [61, "IR 1993\nCFRC", "12.30", nept + "~statii~ din ~Eforie~", "c14.03/14.25", "Nord-16.51/17.25", "~Rosiori~ Nord-Craiova 20.58"],
        [41, "IR 15582\nATC", "13.55", nept + "~statii~ din ~Eforie~", "15.04/15.15", "Nord 17.34", "#orange"],
        [21, "IR 1929", "--------------", "-------------------", "c14.00", "Nord 16.19/16.38", "Ploiesti Vest-Brasov 19.20-Sibiu 22.36"],
        [42, "IR 16089\nRC", "14.30", nept + "~statii~ din ~Eforie~", "15.37/15.47", "~Baneasa~ 17.48", "Brasov 20.35"],
        [82, "IR 1945\nCFRC", "15.15", "-~ambele~ ~statii~ din ~Neptun~, ~CostinestI~,~Tuzla-~\n~ambele~ ~statii~ din ~Eforie,Agigea~ ~Ecluza~\n\nTRENUL DIAGONALA!", "16.49/17.10", "~Baneasa~ 19.26/19.31", "Brasov 22.17-Deda-Dej 5.03-Baia Mare\n7.55-SATU MARE 9.29\n~Grupa~ ~Deda-Tg~ ~Mures~(~sos~ 4.40)\n~Grupa~ ~Dej-Cluj~(~sos~ 7.20)"],
        [42, "IR  1931\nCFRC", "15.55", "~Ambele~ ~statii~ din ~Neptun,Costinesti,Eforie~ ~si~\nTuzla ~hc~ ~si~ ~Agigea~ ~Ecluza~", "17.24/17.50", "~Baneasa~ 20.08/20.12", "Brasov 23.06-Cluj ~Napoca~ 5.56-ORADEA\n9.17"],
        [41, "IR 15983\nSFTRA", "", "", "16.10", "Nord 18.23/18.35", "Craiova 21.58"],
        [21, "IR 15593", "", "", "17.30", "Nord    20.04    /20.25", "Craiova-Timisoara 6.04-Arad 7.04"],
        [21, "IR 1971", "", "", "17.57", "", "Braila-GALATI 22.00"],
        [42, "IR 1984", "17.20", "~Ambele~ ~statii~ din ~Neptun,Costinesti,Eforie~ ~si~\n~Agigea~ ~Ecluza~", "18.59/19.15", "NORD 21.38", ""],
        [41, "IR 1923", "18.10", nept + "~statii~ din ~Eforie-ambele~ ~statii~ ~Agigea~", "19.42/20.00", "Nord 22.36/22.57", "Pitesti 0.55-Rm ~Valcea~ 5.07-Sibiu 7.36"],
        [42, "IR 1921", "19.12", nept + "~statii~ din ~Eforie~", "20.32/20.50", "Nord 23,14/23.40", "Craiova 3.06-Tg ~jiu~ 4.55-Petrosani-Deva-\nArad 11.52"],
        [62, "IR 1991", "20.00", nept + "~istatii~ ~dn~ ~Eforie~", "c21.23/21.45", "~Baneasa~ 0.06/0.12", "Craiova-Dr ~Tr.Severin-Caransebes~(Resita\n10.05)-Timisoara\n~Grupa~  ~Filiasi-Tg~ ~Jiu~-Deva(~sos~ 9.38)"],
        [42, "IR 1961", "20.30", "~Neptun~ ~hc-ambele~ ~statii~ din ~CostinestI~,~Tuzla-~\n~ambele~ ~statii~ din ~Eforie,ambele~ ~statii~ ~Agigea~", "22.02/22.20", "---", "#yellowBRAILA –~Vaslui-Iasi~ 6.27"],
        [41, "IR 1953", "21.34", nept + "~istatii~ ~dn~ ~Eforie~", "22.58/23.15", "-----", "#yellowBuzau-Focsani-Bacau-~Suceava~ Nord 7.03"],
      ];

      const base = "border border-black px-[9px] pt-0 align-top whitespace-pre leading-[20px] overflow-hidden";
      const inner = (text) => `<div class="-mt-[1px]">${text}</div>`;
      const cell = (value) => {
        if (value === "#peach") return `<td class="${base} bg-[#fbd4b4]"></td>`;
        if (value === "#orange") return `<td class="${base} bg-[#f79646]"></td>`;
        if (value.startsWith("#yellow")) return `<td class="${base} bg-[#ffff00]">${inner(mark(value.slice(7)))}</td>`;
        if (/^c\d/.test(value)) return `<td class="${base} text-center">${inner(value.slice(1))}</td>`;
        if (/^-+$/.test(value)) return `<td class="${base} tracking-[-0.7px]">${inner(value)}</td>`;
        return `<td class="${base}">${inner(mark(value))}</td>`;
      };

      document.querySelector("#rows").innerHTML = rows
        .map(([height, ...cells]) => `<tr style="height:${height}px">${cells.map(cell).join("")}</tr>`)
        .join("");

      document.querySelector("#heading").innerHTML = mark(
        "SEZONIERE PENTRU CONSTANTENI ~si~ ^nu^  ~numai~.....EPISODUL 2 ~incepand~ din 27.06-06.09.....~hai~ la ~tren~...."
      );
    </script>
  </body>
</html>
